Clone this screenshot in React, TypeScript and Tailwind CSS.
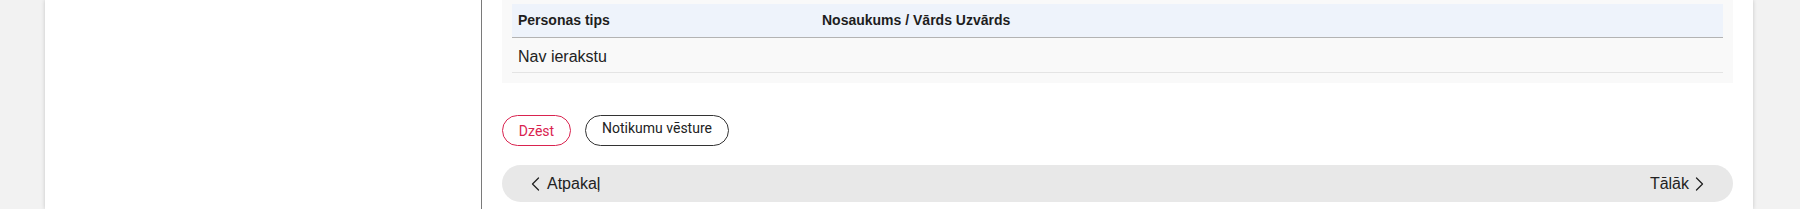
import React from 'react';

const Chevron: React.FC<{ dir: 'left' | 'right' }> = ({ dir }) => (
  <svg width="9" height="14" viewBox="0 0 9 14" fill="none" className="shrink-0">
    <path
      d={dir === 'left' ? 'M7.5 1 L1.5 7 L7.5 13' : 'M1.5 1 L7.5 7 L1.5 13'}
      stroke="#222"
      strokeWidth="1.3"
      strokeLinecap="round"
      strokeLinejoin="round"
    />
  </svg>
);

export default function App() {
  return (
    <div className="h-[209px] overflow-hidden bg-[#f2f2f2] pl-[45px] pr-[47px] font-['Liberation_Sans',Arial,sans-serif] text-[#222]">
      <div className="flex h-full bg-white shadow-[0_0_4px_rgba(0,0,0,0.18)]">
        {/* left column */}
        <div className="w-[437px] shrink-0 border-r border-[#7a7a7a]" />

        {/* right column */}
        <div className="flex-1 px-[20px]">
          <div className="bg-[#f9f9f9] px-[10px] pt-[4px] pb-[10px]">
            <div className="flex h-[34px] items-center border-b border-[#b3b3b3] bg-[#eef3fb] text-[14px] font-bold text-[#1e1e1e]">
              <div className="w-[310px] pl-[6px]">Personas tips</div>
              <div>Nosaukums / Vārds Uzvārds</div>
            </div>
            <div className="flex h-[35px] items-center border-b border-[#e4e4e4] pl-[6px] pt-[4px] text-[16px]">
              Nav ierakstu
            </div>
          </div>

          <div className="mt-[32px] flex gap-[14px] font-['Roboto',sans-serif] text-[14px]">
            <button className="flex h-[31px] w-[69px] items-center justify-center rounded-full border border-[#d9234f] pt-[1px] text-[#d9234f]">
              Dzēst
            </button>
            <button className="flex h-[31px] w-[144px] items-start justify-center rounded-full border border-[#333] pt-[2px] text-[#222]">
              Notikumu vēsture
            </button>
          </div>

          <div className="mt-[19px] flex h-[37px] items-center justify-between rounded-full bg-[#e8e8e8] px-[29px] text-[16px]">
            <div className="flex items-center gap-[7px]">
              <Chevron dir="left" />
              <span>Atpakaļ</span>
            </div>
            <div className="flex items-center gap-[6px]">
              <span>Tālāk</span>
              <Chevron dir="right" />
            </div>
          </div>
        </div>
      </div>
    </div>
  );
}
